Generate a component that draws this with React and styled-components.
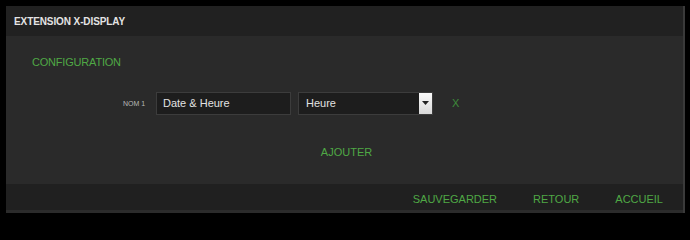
import React from 'react';
import styled, { createGlobalStyle } from 'styled-components';

const GlobalStyle = createGlobalStyle`
  html, body {
    margin: 0;
    padding: 0;
    background: #000;
  }
  body {
    font-family: 'Liberation Sans', Arial, sans-serif;
  }
`;

const Page = styled.div`
  width: 690px;
  height: 224px;
  padding: 6px;
  box-sizing: border-box;
  background: #000;
`;

const Panel = styled.div`
  width: 677px;
  border-right: 2px solid #3a3a3a;
  display: flex;
  flex-direction: column;
`;

const Header = styled.div`
  height: 30px;
  background: #212121;
  display: flex;
  align-items: center;
  padding-left: 8px;
`;

const Title = styled.h1`
  margin: 0;
  font-size: 10px;
  font-weight: bold;
  color: #e4e4e4;
  letter-spacing: -0.1px;
`;

const Body = styled.div`
  height: 148px;
  background: #2a2a2a;
  display: flex;
  flex-direction: column;
`;

const SectionTitle = styled.div`
  padding: 20px 0 0 26px;
  height: 13px;
  font-size: 11px;
  line-height: 13px;
  color: #4fa845;
  letter-spacing: -0.2px;
`;

const Row = styled.div`
  display: flex;
  align-items: center;
  margin-top: 22px;
  padding-left: 112px;
  height: 24px;
`;

const Label = styled.span`
  width: 32px;
  text-align: center;
  font-size: 7px;
  color: #b8b8b8;
  margin-right: 6px;
`;

const Field = styled.div`
  width: 135px;
  height: 23px;
  box-sizing: border-box;
  background: #1d1d1d;
  border: 1px solid #3c3c3c;
  display: flex;
  align-items: center;
  padding-left: 6px;
  font-size: 11px;
  color: #e2e2e2;
  margin-right: ${p => p.gap || 0}px;
`;

const Select = styled(Field)`
  padding-left: 0;
  justify-content: space-between;
`;

const SelectText = styled.span`
  padding-left: 7px;
`;

const Arrow = styled.div`
  width: 13px;
  height: 21px;
  background: linear-gradient(#fafafa, #d8d8d8);
  display: flex;
  align-items: center;
  justify-content: center;
`;

const Link = styled.span`
  font-size: 11px;
  color: #4fa845;
  cursor: pointer;
`;

const Remove = styled(Link)`
  margin-left: 19px;
  color: #3e8a3a;
`;

const AddRow = styled.div`
  display: flex;
  justify-content: center;
  padding-left: 4px;
  margin-top: 31px;
`;

const Footer = styled.div`
  height: 29px;
  background: #202020;
  border-bottom: 3px solid #2b2b2b;
  box-sizing: border-box;
  display: flex;
  align-items: center;
  justify-content: flex-end;
  gap: 36px;
  padding-right: 20px;
  padding-top: 3px;
`;

export default function App() {
  return (
    <>
      <GlobalStyle />
      <Page>
        <Panel>
          <Header>
            <Title>EXTENSION X-DISPLAY</Title>
          </Header>
          <Body>
            <SectionTitle>CONFIGURATION</SectionTitle>
            <Row>
              <Label>NOM 1</Label>
              <Field gap={7}>Date &amp; Heure</Field>
              <Select>
                <SelectText>Heure</SelectText>
                <Arrow>
                  <svg width="7" height="4" viewBox="0 0 7 4">
                    <path d="M0 0h7L3.5 4z" fill="#222" />
                  </svg>
                </Arrow>
              </Select>
              <Remove>X</Remove>
            </Row>
            <AddRow>
              <Link>AJOUTER</Link>
            </AddRow>
          </Body>
          <Footer>
            <Link>SAUVEGARDER</Link>
            <Link>RETOUR</Link>
            <Link>ACCUEIL</Link>
          </Footer>
        </Panel>
      </Page>
    </>
  );
}
